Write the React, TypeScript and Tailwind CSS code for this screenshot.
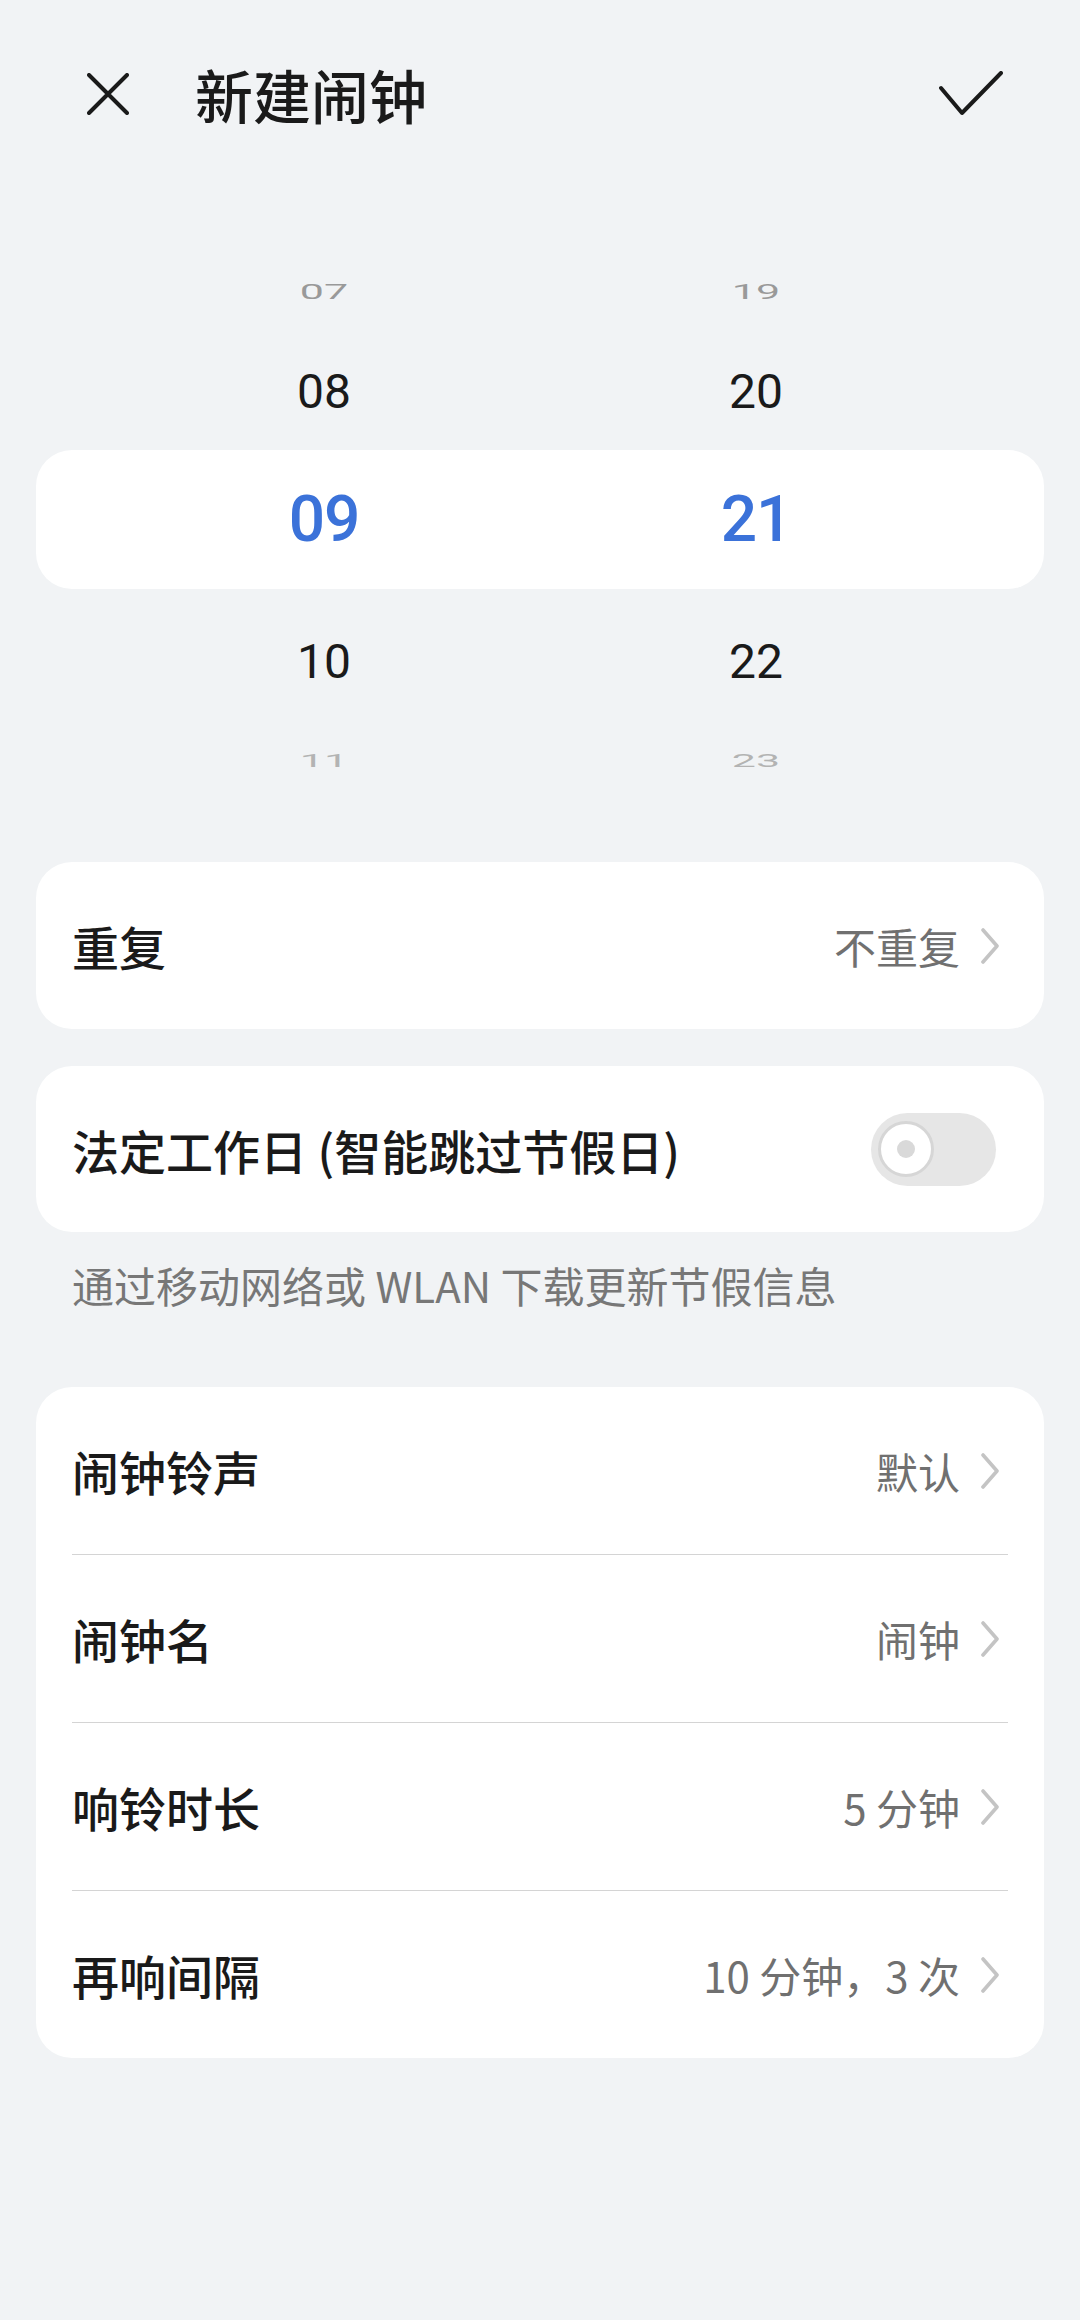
import React from "react";

const Chevron = () => (
  <svg width="20" height="36" viewBox="0 0 20 36" fill="none" className="shrink-0">
    <path d="M3 2 L17 18 L3 34" stroke="#c4c4c4" strokeWidth="3.6" strokeLinecap="round" strokeLinejoin="round" />
  </svg>
);

const PickerRow = ({
  h,
  m,
  height,
  cls,
  transformCls = "",
}: {
  h: string;
  m: string;
  height: string;
  cls: string;
  transformCls?: string;
}) => (
  <div className={`flex justify-center items-center ${height}`}>
    <div className={`w-[432px] text-center ${cls}`}>
      <span className={`inline-block ${transformCls}`}>{h}</span>
    </div>
    <div className={`w-[432px] text-center ${cls}`}>
      <span className={`inline-block ${transformCls}`}>{m}</span>
    </div>
  </div>
);

const Row = ({ label, value }: { label: string; value: string }) => (
  <div className="flex items-center justify-between h-[167px] pl-[36px] pr-[44px]">
    <span className="text-[47px] font-medium text-[#1a1a1a] leading-none">{label}</span>
    <div className="flex items-center gap-[20px]">
      <span className="text-[42px] text-[#707070] leading-none">{value}</span>
      <Chevron />
    </div>
  </div>
);

export default function App() {
  return (
    <div className="w-[1080px] h-[2320px] bg-[#f1f3f5] font-['Noto_Sans_CJK_SC','Noto_Sans',sans-serif] overflow-hidden">
      {/* Header */}
      <div className="flex items-center h-[188px] pl-[87px] pr-[77px]">
        <svg width="42" height="42" viewBox="0 0 42 42" fill="none" className="shrink-0">
          <path d="M2 2 L40 40 M40 2 L2 40" stroke="#1a1a1a" strokeWidth="4" strokeLinecap="round" />
        </svg>
        <span className="ml-[66px] text-[58px] font-medium text-[#1a1a1a] leading-none">新建闹钟</span>
        <div className="flex-1" />
        <svg width="64" height="46" viewBox="0 0 64 46" fill="none" className="shrink-0">
          <path d="M2 17 L23 42 L62 2" stroke="#1a1a1a" strokeWidth="4" strokeLinecap="round" strokeLinejoin="round" />
        </svg>
      </div>

      {/* Time picker */}
      <div className="mt-[62px] font-['Roboto','Noto_Sans_CJK_SC',sans-serif]">
        <PickerRow h="07" m="19" height="h-[84px]" cls="text-[43px] text-[#999999] leading-none" transformCls="scale-y-[0.45]" />
        <PickerRow h="08" m="20" height="h-[116px]" cls="text-[48px] text-[#1a1a1a] leading-none" />
        <div className="mx-[36px] h-[139px] bg-white rounded-[36px] flex justify-center items-center">
          <div className="w-[432px] text-center text-[64px] font-medium tracking-[-1px] text-[#3b72d9] leading-none">09</div>
          <div className="w-[432px] text-center text-[64px] font-medium tracking-[-1px] text-[#3b72d9] leading-none">21</div>
        </div>
        <PickerRow h="10" m="22" height="h-[146px]" cls="text-[48px] text-[#1a1a1a] leading-none" />
        <PickerRow h="11" m="23" height="h-[50px]" cls="text-[43px] text-[#b3b3b3] leading-none" transformCls="scale-y-[0.42]" />
      </div>

      {/* Repeat card */}
      <div className="mt-[77px] mx-[36px] bg-white rounded-[36px]">
        <Row label="重复" value="不重复" />
      </div>

      {/* Workday card */}
      <div className="mt-[37px] mx-[36px] bg-white rounded-[36px] h-[166px] flex items-center justify-between pl-[36px] pr-[48px]">
        <span className="text-[47px] font-medium text-[#1a1a1a] leading-none">法定工作日 (智能跳过节假日)</span>
        <div className="w-[125px] h-[73px] rounded-full bg-[#e6e6e6] flex items-center pl-[7px]">
          <div className="w-[56px] h-[56px] rounded-full bg-white border-[3px] border-[#d6d6d6] flex items-center justify-center">
            <div className="w-[18px] h-[18px] rounded-full bg-[#d9d9d9]" />
          </div>
        </div>
      </div>

      <div className="pl-[72px] pt-[32px] text-[42px] text-[#777777] leading-none">
        通过移动网络或 WLAN 下载更新节假信息
      </div>

      {/* Settings card */}
      <div className="mt-[81px] mx-[36px] bg-white rounded-[36px] flex flex-col">
        <Row label="闹钟铃声" value="默认" />
        <div className="mx-[36px] h-px bg-[#d4d4d4]" />
        <Row label="闹钟名" value="闹钟" />
        <div className="mx-[36px] h-px bg-[#d4d4d4]" />
        <Row label="响铃时长" value="5 分钟" />
        <div className="mx-[36px] h-px bg-[#d4d4d4]" />
        <Row label="再响间隔" value="10 分钟，3 次" />
      </div>
    </div>
  );
}
